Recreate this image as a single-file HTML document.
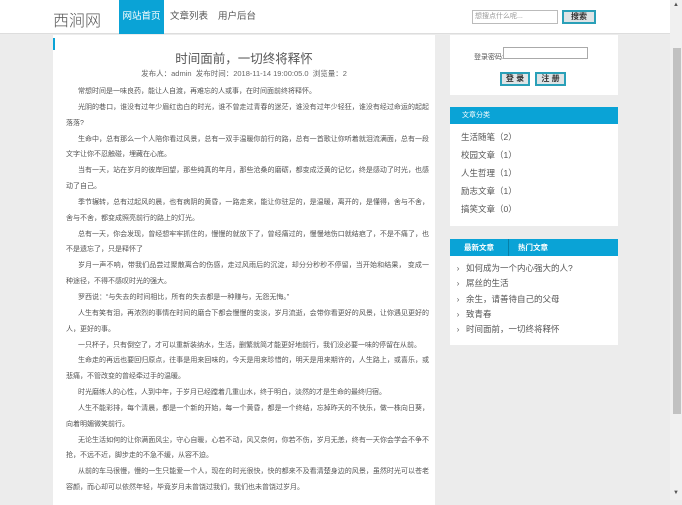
<!DOCTYPE html>
<html><head><meta charset="utf-8"><style>
*{margin:0;padding:0;box-sizing:border-box}
body{width:682px;height:500px;overflow:hidden;background:#ececec;font-family:"Liberation Sans","Noto Sans CJK SC",sans-serif;color:#444;position:relative}
.a{position:absolute}
#hdr{left:0;top:0;width:670px;height:34px;background:#fff;border-bottom:1px solid #ddd}
.logo{left:53px;top:7px;font-size:16px;color:#555;font-weight:300}
.nav{top:0;height:34px;line-height:34px;font-size:9.5px;color:#555;text-align:center}
#main{left:53px;top:35px;width:382px;height:470px;background:#fff}
.txt{left:66px;top:84px;width:363px;font-size:7px;line-height:15.84px;color:#555;text-align:justify}
.txt p{text-indent:12px;white-space:nowrap;overflow:hidden}
.txt p.w{white-space:normal}
.box{background:#fff;left:450px;width:168px}
.bh{background:#0aa3d6;height:17px;color:#fff;font-size:7px;line-height:17px}
.cat{font-size:8.5px;color:#555;line-height:18px;padding-left:11px;padding-top:4px}
.lst{font-size:8.5px;color:#555;line-height:15.3px;padding-top:5px}
.lst div:before{content:"›";display:inline-block;width:16px;text-align:center;color:#666}
.btn{background:#dfe4e6;border:2px solid #2aa0b8;font-size:8px;text-align:center;color:#333;font-weight:bold}
</style></head><body>
<div id="hdr" class="a"></div>
<div class="a logo">西涧网</div>
<div class="a nav" style="left:119px;width:45px;background:#0aa3d6;color:#fff">网站首页</div>
<div class="a nav" style="left:170px;width:38px">文章列表</div>
<div class="a nav" style="left:218px;width:38px">用户后台</div>
<div class="a" style="left:472px;top:10px;width:86px;height:14px;border:1px solid #bbb;font-size:7px;color:#999;line-height:12px;padding-left:2px;background:#fff">想搜点什么呢...</div>
<div class="a btn" style="left:562px;top:10px;width:34px;height:14px;line-height:10px">搜索</div>

<div id="main" class="a"></div>
<div class="a" style="left:53px;top:38px;width:2px;height:12px;background:#0aa3d6"></div>
<div class="a" style="left:53px;top:48px;width:382px;text-align:center;font-size:12.5px;color:#555">时间面前，一切终将释怀</div>
<div class="a" style="left:53px;top:68px;width:382px;text-align:center;font-size:7.5px;color:#666">发布人：admin&nbsp; 发布时间：2018-11-14 19:00:05.0&nbsp; 浏览量：2</div>
<div class="a txt">
<p>常想时间是一味良药，能让人自渡，再难忘的人或事，在时间面前终将释怀。</p>
<p class="w">光阴的巷口，谁没有过年少眉红齿白的时光，谁不曾走过青春的迷茫，谁没有过年少轻狂，谁没有经过命运的起起落落?</p>
<p class="w">生命中，总有那么一个人陪你看过风景，总有一双手温暖你前行的路，总有一首歌让你听着就泪流满面，总有一段文字让你不忍触碰，埋藏在心底。</p>
<p class="w">当有一天，站在岁月的彼岸回望，那些纯真的年月，那些沧桑的磨砺，都变成泛黄的记忆，终是感动了时光，也感动了自己。</p>
<p class="w">季节辗转，总有过起风的晨，也有病阴的黄昏，一路走来，能让你驻足的，是温暖，离开的，是懂得，舍与不舍，舍与不舍，都变成照亮前行的路上的灯光。</p>
<p class="w">总有一天，你会发现，曾经想牢牢抓住的，慢慢的就放下了，曾经痛过的，慢慢地伤口就结疤了，不是不痛了，也不是遗忘了，只是释怀了</p>
<p class="w">岁月一声不响，带我们品尝过聚散离合的伤感，走过风雨后的沉淀，却分分秒秒不停留，当开始和结果， 变成一种途径，不得不感叹时光的强大。</p>
<p>罗西说：“与失去的时间相比，所有的失去都是一种赚与，无怨无悔。”</p>
<p class="w">人生有笑有泪，再浓烈的事情在时间的磨合下都会慢慢的变淡，岁月流逝，会带你看更好的风景，让你遇见更好的人，更好的事。</p>
<p>一只杯子，只有倒空了，才可以重新装纳水，生活，删繁就简才能更好地前行，我们没必要一味的停留在从前。</p>
<p class="w">生命走的再远也要回归原点，往事是用来回味的，今天是用来珍惜的，明天是用来期许的，人生路上，或喜乐，或悲痛，不管改变的曾经牵过手的温暖。</p>
<p>时光磨练人的心性，人到中年，于岁月已经蹚着几重山水，终于明白，淡然的才是生命的最终归宿。</p>
<p class="w">人生不能彩排，每个清晨，都是一个新的开始，每一个黄昏，都是一个终结，忘掉昨天的不快乐，做一株向日葵，向着明媚微笑前行。</p>
<p class="w">无论生活如何的让你满面风尘，守心自暖，心若不动，风又奈何，你若不伤，岁月无恙，终有一天你会学会不争不抢，不远不近，脚步走的不急不缓，从容不迫。</p>
<p class="w">从前的车马很慢，慢的一生只能爱一个人，现在的时光很快，快的都来不及看清楚身边的风景，虽然时光可以苍老容颜，而心却可以依然年轻，毕竟岁月未曾饶过我们，我们也未曾饶过岁月。</p>
</div>

<div class="a box" style="top:35px;height:60px"></div>
<div class="a" style="left:474px;top:52px;font-size:7px;color:#555">登录密码:</div>
<div class="a" style="left:503px;top:47px;width:85px;height:12px;border:1px solid #aaa;background:#fff"></div>
<div class="a btn" style="left:500px;top:72px;width:30px;height:14px;line-height:10px">登 录</div>
<div class="a btn" style="left:535px;top:72px;width:31px;height:14px;line-height:10px">注 册</div>

<div class="a box" style="top:107px;height:119px">
<div class="bh" style="padding-left:12px">文章分类</div>
<div class="cat"><div>生活随笔（2）</div><div>校园文章（1）</div><div>人生哲理（1）</div><div>励志文章（1）</div><div>搞笑文章（0）</div></div>
</div>

<div class="a box" style="top:239px;height:106px">
<div class="bh" style="font-weight:bold;font-size:7.5px"><span style="display:inline-block;width:59px;text-align:center;border-right:1px solid #0680a8">最新文章</span><span style="padding-left:9px">热门文章</span></div>
<div class="lst" style="padding-left:0"><div>如何成为一个内心强大的人?</div><div>屌丝的生活</div><div>余生，请善待自己的父母</div><div>致青春</div><div>时间面前，一切终将释怀</div></div>
</div>

<div class="a" style="left:670px;top:0;width:12px;height:500px;background:#f0f0f0"></div>
<div class="a" style="left:673px;top:48px;width:8px;height:366px;background:#c2c2c2"></div>
<div class="a" style="left:673px;top:2px;font-size:6px;color:#555">▲</div>
<div class="a" style="left:673px;top:490px;font-size:6px;color:#555">▼</div>
</body></html>
